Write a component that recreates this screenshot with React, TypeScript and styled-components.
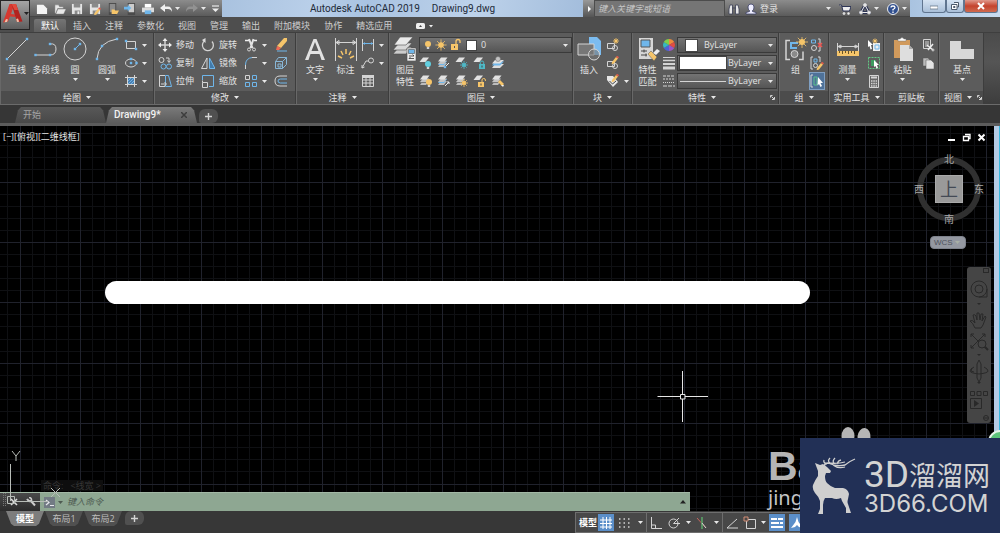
import React from "react";
import styled, { createGlobalStyle, css } from "styled-components";

const GlobalStyle = createGlobalStyle`
  * { box-sizing: border-box; }
  body {
    margin: 0;
    background: #000;
    color: #e2e2e2;
    font: 9px/12px "Open Sans", "Noto Sans CJK SC", sans-serif;
    overflow: hidden;
  }
  button, select, input { font: inherit; color: inherit; margin: 0; padding: 0; border: 0; background: none; }
  svg { display: block; flex: none; }
`;

const L = "#d4d4d4";
const B = "#6fb6ea";
const Y = "#f6c56a";

/* ---------- drawing helpers ---------- */

type IconProps = { size?: number; w?: number; box?: number; children: React.ReactNode };
const Icon = ({ size = 14, w, box, children }: IconProps) => (
  <svg
    width={w ?? size}
    height={size}
    viewBox={`0 0 ${w ?? box ?? size} ${box ?? size}`}
    fill="none"
    stroke={L}
    strokeWidth="1"
    aria-hidden="true"
  >
    {children}
  </svg>
);

const Arrow = () => (
  <svg width="5" height="3" viewBox="0 0 5 3" aria-hidden="true">
    <path d="M0 0h5L2.500 3z" fill="#e8e8e8" />
  </svg>
);

const Dot = ({ x, y }: { x: number; y: number }) => (
  <rect x={x - 1.2} y={y - 1.2} width="2.4" height="2.4" fill={B} stroke="none" />
);

const Bulb = ({ x, y, c = Y }: { x: number; y: number; c?: string }) => (
  <g stroke="none">
    <circle cx={x} cy={y} r="3" fill={c} />
    <path d={`M${x - 1.2} ${y + 3}h2.400v2h-2.400z`} fill={L} />
  </g>
);

const Sun = ({ x, y, r = 2.6, c = Y }: { x: number; y: number; r?: number; c?: string }) => (
  <g stroke={c}>
    <circle cx={x} cy={y} r={r} fill={c} stroke="none" />
    <path
      d={`M${x} ${y - r * 2}V${y + r * 2}M${x - r * 2} ${y}H${x + r * 2}M${x - r * 1.4} ${y - r * 1.4}L${x + r * 1.4} ${y + r * 1.4}M${x + r * 1.4} ${y - r * 1.4}L${x - r * 1.4} ${y + r * 1.4}`}
      strokeWidth=".8"
    />
  </g>
);

const Lock = ({ x, y, c = Y, open = false }: { x: number; y: number; c?: string; open?: boolean }) => (
  <g>
    <rect x={x} y={y} width="6" height="5" fill={c} stroke="none" />
    <path d={open ? `M${x + 4} ${y}v-2q0-1.500 1.700-1.500t1.700 1.500v1` : `M${x + 1.3} ${y}v-1.500q0-1.500 1.700-1.500t1.700 1.500v1.500`} stroke={c} />
    <rect x={x + 2.5} y={y + 1.5} width="1" height="2" fill="#444" stroke="none" />
  </g>
);

const Pencil = ({ x, y }: { x: number; y: number }) => (
  <g stroke="none">
    <path d={`M${x} ${y}l4-5 2 1.500-4 5-2.400 .8z`} fill={Y} />
    <path d={`M${x + 4} ${y - 5}l1-1.300 2 1.500-1 1.300z`} fill="#e25a4a" />
  </g>
);

const Sheets = ({ blue = false }: { blue?: boolean }) => (
  <g stroke="none">
    <path d="M4 7l-3 4h6l3-4z" fill="#bcbcbc" />
    <path d="M4 5l-3 4h6l3-4z" fill={blue ? B : "#777"} />
    <path d="M4 4.500l-3 3.500h6l3-3.500z" fill="#c4c4c4" />
    <path d="M4 1.500l-3 4h6.500l3-4z" fill="#e2e2e2" />
  </g>
);

const OneSheet = () => <path d="M4 1.500l-3.500 4.500h6l3.500-4.500z" fill="#e2e2e2" stroke="none" />;

/* ---------- page frame ---------- */

const Page = styled.div`
  position: relative;
  display: flex;
  flex-direction: column;
  min-height: 100vh;
`;

const Header = styled.header`
  display: grid;
  grid-template: 17px 15px / 30px 1fr;
  background: #4e4e4e;
`;

const AppButton = styled.button`
  grid-row: 1 / 3;
  display: flex;
  align-items: center;
  gap: 1px;
  padding: 0 1px 4px 2px;
  height: 30px;
  border: 1px solid #262626;
  background: linear-gradient(#a4a4a4, #5e5e5e);
  overflow: hidden;
`;

const TitleBar = styled.div`
  display: grid;
  grid-template-columns: 192px 1fr 11px 131px 185px 90px;
  background: linear-gradient(#8c8c8c, #5b5b5b);
  border-bottom: 1px solid #444;
`;

const QuickBar = styled.div`
  display: flex;
  align-items: center;
  gap: 6px;
  padding-left: 6px;
`;

const QuickGroup = styled.div`
  display: flex;
  justify-content: space-between;
  width: 118px;
`;

const PlainButton = styled.button`
  display: flex;
  align-items: center;
  gap: 3px;
`;

const WindowTitle = styled.h1`
  display: flex;
  justify-content: center;
  gap: 12px;
  margin: 0;
  color: #1e2a38;
  font: 400 10px/17px Roboto, sans-serif;
  background: linear-gradient(100deg, #a9c2df, #b9cfe9 25%, #a9c3e2 40%, #bdd2ea 70%, #a3bddc);
`;

const SearchToggle = styled.button`
  display: grid;
  place-items: center;
  background: linear-gradient(#999, #555);
`;

const Search = styled.input`
  min-width: 0;
  padding: 0 3px;
  border: 1px solid #4c4c4c;
  background: #757575;
  font-style: italic;
  &::placeholder { color: #c6c6c6; opacity: 1; }
`;

const Account = styled.div`
  display: grid;
  grid-template-columns: 17px 1fr auto;
  align-items: center;
  padding: 0 3px;
`;

const AccountTools = styled.div`
  display: flex;
  align-items: center;
  gap: 8px;
`;

const WindowButtons = styled.div`
  display: flex;
  align-items: flex-start;
  justify-content: flex-end;
  padding-right: 2px;
  background: linear-gradient(90deg, #a9c3e0, #c9dcf1);
`;

const WindowButton = styled.button<{ $w: number; $close?: boolean }>`
  display: grid;
  place-items: center;
  width: ${(p) => p.$w}px;
  height: 13px;
  border: 1px solid #60758f;
  border-top: 0;
  border-radius: 0 0 3px 3px;
  background: ${(p) => (p.$close ? "linear-gradient(#e0998c, #c4432e 50%, #cf6a50)" : "linear-gradient(#d5e3f2, #a9bfd8)")};
`;

const RibbonTabs = styled.nav`
  display: flex;
  align-items: flex-end;
  padding-left: 4px;
`;

const RibbonTab = styled.button<{ $active?: boolean }>`
  height: 13px;
  padding: 0 7px;
  line-height: 12px;
  white-space: nowrap;
  border-radius: 2px 2px 0 0;
  color: ${(p) => (p.$active ? "#fff" : "#cfcfcf")};
  background: ${(p) => (p.$active ? "linear-gradient(#747474, #5e5e5e)" : "none")};
`;

/* ---------- ribbon ---------- */

const panelShares = [154, 142, 93, 184, 59, 147, 50, 55, 55, 45, 16];

const Ribbon = styled.div`
  display: grid;
  grid-template-columns: ${panelShares.map((s) => `minmax(0, ${s}fr)`).join(" ")};
  height: 73px;
  border-top: 1px solid #3f3f3f;
  border-bottom: 1px solid #6b6b6b;
  background: #4a4a4a;
`;

const PanelBox = styled.section`
  display: flex;
  flex-direction: column;
  border-right: 1px solid #3d3d3d;
  border-left: 1px solid #686868;
  background: #5c5c5c;
`;

const RibbonTail = styled.div`
  background: linear-gradient(#4b4b4b, #555 40%, #3d3d3d);
`;

const PanelBody = styled.div<{ $pad?: number; $gap?: number }>`
  display: flex;
  flex: 1;
  gap: ${(p) => p.$gap ?? 0}px;
  padding: 4px 0 0 ${(p) => p.$pad ?? 0}px;
`;

const PanelFooter = styled.button`
  display: flex;
  align-items: center;
  justify-content: center;
  gap: 5px;
  height: 13px;
  background: #4c4c4c;
  white-space: nowrap;
`;

const FooterEnd = styled.span<{ $far?: boolean }>`
  margin-left: ${(p) => (p.$far ? "auto" : "0")};
  margin-right: ${(p) => (p.$far ? 3 : 0)}px;
`;

const FooterStart = styled.span<{ $far?: boolean }>`
  margin-left: ${(p) => (p.$far ? "auto" : "0")};
  padding-left: ${(p) => (p.$far ? 6 : 0)}px;
`;

const Big = styled.button<{ $w: number }>`
  display: flex;
  flex-direction: column;
  align-items: center;
  flex: none;
  width: ${(p) => p.$w}px;
  height: 52px;
  white-space: nowrap;
  & > span { margin-top: 3px; }
  & > span + svg { margin-top: 2px; }
`;

const Column = styled.div`
  display: flex;
  flex-direction: column;
  flex: none;
  gap: 2px;
`;

const Small = styled.button<{ $active?: boolean }>`
  display: flex;
  align-items: center;
  gap: 4px;
  height: 16px;
  white-space: nowrap;
  ${(p) =>
    p.$active &&
    css`
      background: #4f7299;
      outline: 1px solid #7f9fc2;
    `}
`;

const Row = styled.div<{ $gap: number }>`
  display: flex;
  align-items: center;
  gap: ${(p) => p.$gap}px;
`;

const Combo = styled.label<{ $gap?: number; $pad?: number }>`
  display: flex;
  align-items: center;
  gap: ${(p) => p.$gap ?? 2}px;
  height: 16px;
  padding: 0 3px 0 ${(p) => p.$pad ?? 2}px;
  border: 1px solid #3a3a3a;
  background: linear-gradient(#737373, #555);
`;

const ComboSelect = styled.select`
  appearance: none;
  flex: 1;
  min-width: 0;
  outline: 0;
`;

const Swatch = styled.span<{ $w: number; $h: number }>`
  flex: none;
  width: ${(p) => p.$w}px;
  height: ${(p) => p.$h}px;
  background: #fff;
  outline: 1px solid #444;
`;

const LayerArea = styled.div`
  display: flex;
  flex-direction: column;
  flex: 1;
  min-width: 0;
  gap: 2px;
`;

const PropertyArea = styled(LayerArea)`
  margin: 0 1px;
`;

/* ---------- document tabs ---------- */

const DocTabs = styled.nav`
  display: flex;
  align-items: flex-end;
  height: 21px;
  padding-left: 15px;
  border-bottom: 3px solid #5c5c5c;
  background: #363636;
`;

const DocTab = styled.button<{ $active?: boolean }>`
  display: flex;
  align-items: center;
  justify-content: space-between;
  width: 91px;
  height: 16px;
  padding: 0 10px 0 8px;
  color: ${(p) => (p.$active ? "#f2f2f2" : "#a5a5a5")};
  font: ${(p) => (p.$active ? "500 10px/12px Roboto, sans-serif" : "inherit")};
  background: ${(p) => (p.$active ? "linear-gradient(#7a7a7a, #5c5c5c)" : "linear-gradient(#585858, #484848)")};
  clip-path: polygon(0 100%, 3px 20%, 6px 0, calc(100% - 6px) 0, calc(100% - 3px) 20%, 100% 100%);
`;

const AddTab = styled.button`
  display: grid;
  place-items: center;
  width: 19px;
  height: 14px;
  margin-left: 2px;
  border-radius: 6px 6px 6px 2px;
  background: #505050;
`;

/* ---------- drawing area ---------- */

const Canvas = styled.main`
  position: relative;
  flex: 1;
  min-height: 384px;
  border-right: 6px solid transparent;
  background:
    linear-gradient(#000, #000) padding-box,
    linear-gradient(270deg, #35b6dd 1px, #b4cbe5 1px) border-box;
`;

const Drawing = styled.svg`
  position: absolute;
  inset: 0;
`;

const ViewLabel = styled.div`
  position: absolute;
  top: 5px;
  left: 3px;
  color: #e4e4e4;
`;

const ViewWindow = styled.div`
  position: absolute;
  top: 7px;
  right: 8px;
  display: flex;
  gap: 6px;
`;

const ViewCube = styled.div`
  position: absolute;
  top: 27px;
  right: 9px;
  display: grid;
  grid-template: 12px 48px 12px / 12px 48px 12px;
  place-items: center;
  color: #a8a8a8;
  font-size: 10px;
  & > svg { position: absolute; top: 3px; left: 3px; }
  & > span { position: relative; }
`;

const CubeFace = styled.button`
  position: relative;
  grid-area: 2 / 2;
  width: 28px;
  height: 28px;
  border: 1px solid #aaa;
  background: #999;
  color: #444a55;
  font-size: 18px;
  line-height: 24px;
`;

const Place = styled.span<{ $area: string }>`
  grid-area: ${(p) => p.$area};
`;

const Wcs = styled.button`
  position: absolute;
  top: 110px;
  right: 28px;
  display: flex;
  align-items: center;
  justify-content: space-between;
  width: 36px;
  height: 13px;
  padding: 0 5px 0 3px;
  border: 1px solid #7e828c;
  border-radius: 4px;
  background: #9498a1;
  color: #4e525c;
  font: 8px/10px "Liberation Sans", sans-serif;
`;

const NavBar = styled.div`
  position: absolute;
  top: 141px;
  right: 3px;
  width: 24px;
  height: 156px;
  border-radius: 3px;
  background: #454545;
`;

const History = styled.div`
  position: absolute;
  left: 41px;
  bottom: 20px;
  padding: 0 2px;
  background: #0e0e0e;
  color: #363636;
  white-space: pre;
  line-height: 11px;
`;

const CommandBar = styled.div`
  position: absolute;
  left: 0;
  bottom: 0;
  display: grid;
  grid-template-columns: 40px 24px 1fr 10px;
  align-items: center;
  width: calc(69% + 4px);
  height: 19px;
  background: #8ea792;
  border-top: 1px solid #a2b8a5;
`;

const CommandTools = styled.div`
  display: flex;
  align-items: center;
  align-self: stretch;
  gap: 8px;
  padding-left: 10px;
  background: linear-gradient(#4a4a4a, #2b2b2b);
`;

const CommandInput = styled.input`
  padding-left: 3px;
  outline: 0;
  font-style: italic;
  &::placeholder { color: #4d5a51; opacity: 1; }
`;

const UcsIcon = styled.svg`
  position: absolute;
  left: 0;
  bottom: 0;
`;

/* ---------- status bar ---------- */

const StatusBar = styled.footer`
  display: grid;
  grid-template-columns: 23fr 17fr;
  height: 22px;
  background: #373737;
`;

const LayoutTabs = styled.nav`
  display: flex;
  align-items: flex-start;
  gap: 1px;
  padding-left: 6px;
`;

const LayoutTab = styled.button<{ $active?: boolean }>`
  width: 38px;
  height: 15px;
  color: ${(p) => (p.$active ? "#fff" : "#bdbdbd")};
  font-weight: ${(p) => (p.$active ? 700 : 400)};
  background: ${(p) => (p.$active ? "#7d7d7d" : "#505050")};
  clip-path: polygon(0 0, 100% 0, calc(100% - 5px) 85%, calc(100% - 8px) 100%, 8px 100%, 5px 85%);
`;

const StatusTools = styled.div`
  display: flex;
  align-items: center;
  height: 21px;
  margin-top: 1px;
  padding-left: 2px;
  border: 1px solid #6e6e6e;
  background: #484848;
`;

const StatusButton = styled.button<{ $w: number; $active?: boolean; $split?: boolean }>`
  display: grid;
  place-items: center;
  flex: none;
  width: ${(p) => p.$w}px;
  height: ${(p) => (p.$split ? 19 : 17)}px;
  border-right: ${(p) => (p.$split ? "1px solid #6e6e6e" : "0")};
  background: ${(p) => (p.$active ? "#5b8fc9" : "none")};
  color: #fff;
  font-weight: 700;
`;

/* ---------- marks that lie over the window ---------- */

const PawMark = styled.div`
  position: absolute;
  right: 132px;
  bottom: 20px;
  width: 100px;
  height: 87px;
  color: #b5b5b5;
  font-family: "Liberation Sans", sans-serif;
  & > svg { position: absolute; top: 0; left: 68px; }
`;

const PawName = styled.div`
  margin-top: 20px;
  font-size: 41px;
  font-weight: 700;
  line-height: 41px;
`;

const PawHost = styled.div`
  font: 20px/22px "Noto Sans", sans-serif;
  color: #c6c6c6;
`;

const Orb = styled.svg`
  position: absolute;
  right: 0;
  bottom: 95px;
`;

const Brand = styled.a`
  position: absolute;
  right: 0;
  bottom: 0;
  display: grid;
  grid-template-columns: 64px 1fr;
  width: 200px;
  height: 95px;
  background: #223056;
  color: #d3d3d3;
  text-decoration: none;
`;

const BrandText = styled.div`
  display: flex;
  flex-direction: column;
  padding-top: 19px;
`;

const BrandName = styled.div`
  display: flex;
  align-items: center;
  height: 36px;
  font: 27px/36px "Noto Sans CJK SC", sans-serif;
  white-space: nowrap;
`;

const BrandLatin = styled.span`
  font: 37px/36px Roboto, sans-serif;
`;

const BrandHost = styled.div`
  font: 24px/22px Inter, sans-serif;
`;

/* ---------- ribbon panel wrapper ---------- */

type PanelProps = {
  name: string;
  pad?: number;
  gap?: number;
  menu?: boolean;
  launcher?: boolean;
  children: React.ReactNode;
};
const Panel = ({ name, pad, gap, menu = true, launcher, children }: PanelProps) => (
  <PanelBox>
    <PanelBody $pad={pad} $gap={gap}>{children}</PanelBody>
    <PanelFooter>
      <FooterStart $far={launcher}>{name}</FooterStart>
      {menu && <Arrow />}
      {launcher && (
        <FooterEnd $far>
          <Icon size={5}><path d="M.5 2.500v-2h2M1.500 1.500l2.500 2.500M4.500 2V4.500H2" /></Icon>
        </FooterEnd>
      )}
    </PanelFooter>
  </PanelBox>
);

const File = () => <path d="M1 2h7l4 4v6H1z" fill="#f4f4f4" stroke="none" />;
const Disk = () => (
  <g stroke="none">
    <path d="M1 1h11v11H1z" fill="#e4e4e4" />
    <path d="M3 1h7v4H3zM4 8h6v4H4z" fill="#8a8a8a" />
    <path d="M7 9h2v3H7z" fill="#eee" />
  </g>
);

const quick: [string, React.ReactNode][] = [
  ["新建", <File />],
  ["打开", <path d="M1 11V2h4l1 2h4v2H4l-2 5M4 6.500h9L10.500 12H2z" fill="#e8e8e8" stroke="#777" strokeWidth=".5" />],
  ["保存", <Disk />],
  ["另存为", <g><Disk /><Pencil x={6} y={11} /></g>],
  ["从移动端打开", <g stroke="none"><path d="M2 0h8v13H2z" fill="#4b4b4b" /><path d="M3 1h6v9H3z" fill="#8c8c8c" /><path d="M5 7h3l1 1h4l-2 4H5z" fill={Y} /></g>],
  ["保存到移动端", <g stroke="none"><path d="M4 0h8v13H4z" fill="#4b4b4b" /><path d="M5 1h6v9H5z" fill="#ccc" /><path d="M0 4h4V2l4 3.500L4 9V7H0z" fill={B} /></g>],
  ["打印", <g stroke="none"><path d="M3 1h7v4H3z" fill="#fff" /><path d="M0 5h13v5H0z" fill="#dcdcdc" /><path d="M3 8h7v4H3z" fill={B} /></g>],
];

const undo = "M0 5l5-4v2.500h3q4 0 4 5.500-1-3-4-3H5v3z";

const ribbonTabs = ["默认", "插入", "注释", "参数化", "视图", "管理", "输出", "附加模块", "协作", "精选应用"];

const layerTools: [string, React.ReactNode][] = [
  ["关闭图层", <g><OneSheet /><Bulb x={9} y={8} c="#62cfe0" /></g>],
  ["图层状态", <g><Sheets blue /><path d="M8 11l4-4" stroke="#eee" /><Dot x={8} y={11} /></g>],
  ["冻结图层", <g><OneSheet /><Sun x={9} y={9} r={2} c="#4fb9c7" /></g>],
  ["锁定图层", <g><OneSheet /><Lock x={6} y={8} c="#4fb9c7" /></g>],
  ["置为当前", <g stroke="none"><path d="M4 8l-3 4h8l4-4z" fill="#ddd" /><path d="M4 5.500L1 9.500h8l4-4z" fill={B} /><path d="M4 4L1 7.500h8L13 4z" fill="#e2e2e2" /><circle cx="7" cy="3" r="2.500" fill="#c4c4c4" stroke="#666" strokeWidth=".5" /></g>],
  ["打开图层", <g><Sheets /><Bulb x={10} y={8} /></g>],
  ["匹配图层", <g><Sheets blue /><path d="M8 12l4-4M12 10V8h-2" stroke="#eee" /></g>],
  ["解冻图层", <g><Sheets /><Sun x={9} y={9} r={2} /></g>],
  ["解锁图层", <g><OneSheet /><Lock x={5} y={8} open /></g>],
  ["复制图层", <g><Sheets /><path d="M7 8l4 4 2-2-4-4z" fill={Y} stroke="none" /><path d="M10 11l2 2 1-2z" fill="#eee" stroke="none" /></g>],
];

const gridStep = 60.4;
const gridSpan = 302;
const gridLines = Array.from({ length: 25 }, (_, i) => ({
  at: Math.floor((i * gridStep) / 5) + 0.5,
  major: i % 5 === 0,
}));

export default function App() {
  return (
    <Page>
      <GlobalStyle />
      <Header>
        <AppButton aria-label="应用程序菜单">
          <Icon size={20}>
            <g stroke="none">
              <path d="M6.500 1h5L8 11l4 .5V14l-5-.5L5 18.500l-5 1z" fill="#d6382f" />
              <path d="M8.500 1h4.500l6.500 17.500-5.500 .5-2-6.500z" fill="#b3231f" />
              <path d="M8.500 1H13l2 6-3.500 0z" fill="#e04a3d" />
              <path d="M1.500 19.200L3 16l2 .5-1 2.500zM14 19l-.8-3 1.800-.5 1.200 3.200z" fill="#f3c0a8" />
            </g>
          </Icon>
          <svg width="5" height="3" viewBox="0 0 5 3"><path d="M0 0h5L2.500 3z" fill="#222" /></svg>
        </AppButton>
        <TitleBar>
          <QuickBar>
            <QuickGroup>
              {quick.map(([n, d]) => (
                <PlainButton key={n} aria-label={n}><Icon size={12} box={13}>{d}</Icon></PlainButton>
              ))}
            </QuickGroup>
            <PlainButton aria-label="放弃"><Icon size={12}><path d={undo} fill="#f0f0f0" stroke="none" /></Icon><Arrow /></PlainButton>
            <PlainButton aria-label="重做"><Icon size={12}><path d={undo} transform="matrix(-1 0 0 1 12 0)" fill="#929292" stroke="none" /></Icon><Arrow /></PlainButton>
            <PlainButton aria-label="自定义"><Icon size={7}><path d="M0 1h7" strokeWidth="1.500" /><path d="M0 3.500h7L3.500 7z" fill="#eee" stroke="none" /></Icon></PlainButton>
          </QuickBar>
          <WindowTitle><span>Autodesk AutoCAD 2019</span><span>Drawing9.dwg</span></WindowTitle>
          <SearchToggle aria-label="展开搜索"><Icon size={6}><path d="M2 0l3 3-3 3z" fill="#fff" stroke="none" /></Icon></SearchToggle>
          <Search aria-label="搜索" placeholder="键入关键字或短语" />
          <Account>
            <PlainButton aria-label="查找">
              <Icon size={12}><path d="M1 11V6l1-4h2.500v9zM11 11V6l-1-4H7.500v9zM4.500 5h3" fill="#e8e8e8" stroke="#3b3f55" strokeWidth=".8" /></Icon>
            </PlainButton>
            <PlainButton>
              <Icon size={12}><path d="M6 1q3 0 3 3T7.500 7.500v1L11 9.500V11H1V9.500l3.500-1v-1Q3 7 3 4t3-3z" fill="#eef" stroke="#3b3f66" strokeWidth=".8" /></Icon>
              登录
            </PlainButton>
            <AccountTools>
              <Arrow />
              <PlainButton aria-label="应用商店"><Icon size={12}><path d="M0 2h2.500L4 8h6.500L12 3.500H3" fill="#eee" stroke="#2e3555" /><circle cx="5" cy="10.500" r="1" fill="#eee" /><circle cx="9.500" cy="10.500" r="1" fill="#eee" /></Icon></PlainButton>
              <PlainButton aria-label="连接"><Icon size={12}><path d="M6 2L2 9.500h8z" stroke="#2e3555" strokeWidth="3" /><path d="M6 2L2 9.500h8z" stroke="#eee" /><circle cx="6" cy="2" r="1.500" fill="#eee" /><circle cx="2" cy="9.500" r="1.500" fill="#eee" /><circle cx="10" cy="9.500" r="1.500" fill="#eee" /></Icon><Arrow /></PlainButton>
              <PlainButton aria-label="帮助"><Icon size={12}><circle cx="6" cy="6" r="5.500" fill="#31508f" stroke="#eee" /><path d="M4 4.500Q4 3 6 3t2 1.500Q8 5.500 6 6.500V7.500M6 8.500V10" stroke="#fff" strokeWidth="1.300" /></Icon><Arrow /></PlainButton>
            </AccountTools>
          </Account>
          <WindowButtons>
            <WindowButton $w={24} aria-label="最小化"><Icon size={8}><path d="M0 4h8v3H0z" fill="#fff" stroke="#68788c" strokeWidth=".8" /></Icon></WindowButton>
            <WindowButton $w={18} aria-label="还原"><Icon size={8}><path d="M3 .5h4.500V5H6M.5 2.500H6v5H.5zM2.500 4.500h1.500v1H2.500z" fill="#fff" stroke="#4c5a6c" /></Icon></WindowButton>
            <WindowButton $w={34} $close aria-label="关闭"><Icon size={8}><path d="M1 1l6 6M7 1L1 7" stroke="#fff" strokeWidth="2" /></Icon></WindowButton>
          </WindowButtons>
        </TitleBar>
        <RibbonTabs>
          {ribbonTabs.map((t, i) => <RibbonTab key={t} $active={i === 0}>{t}</RibbonTab>)}
          <RibbonTab aria-label="最小化功能区">
            <Icon w={28} size={12}>
              <rect x="10" y="3" width="9" height="6" rx="1.500" fill="#eee" stroke="none" />
              <path d="M13 7h3l-1.500-2z" fill="#444" stroke="none" />
              <path d="M23 5h4l-2 2.500z" fill="#eee" stroke="none" />
            </Icon>
          </RibbonTab>
        </RibbonTabs>
      </Header>

      <Ribbon>
        <Panel name="绘图" pad={1}>
          <Big $w={30}><Icon size={24}><path d="M2 22L22 2" /><Dot x={2} y={22} /><Dot x={22} y={2} /></Icon><span>直线</span></Big>
          <Big $w={28}><Icon size={24}><path d="M1 18h15q6 0 6-6t-6-5" /><Dot x={1.5} y={18} /><Dot x={16} y={18} /><Dot x={16} y={7} /></Icon><span>多段线</span></Big>
          <Big $w={30}><Icon size={24}><circle cx="12" cy="12" r="11" /><path d="M12 12l5-5" stroke={B} /><Dot x={12} y={12} /><Dot x={17} y={7} /></Icon><span>圆</span><Arrow /></Big>
          <Big $w={34}><Icon size={24}><path d="M2 22Q3 5 22 2" /><Dot x={2} y={22} /><Dot x={7} y={9} /><Dot x={22} y={2} /></Icon><span>圆弧</span><Arrow /></Big>
          <Column>
            <Small aria-label="矩形"><Icon><path d="M2.500 3.500h9v7h-9z" /><Dot x={2} y={3} /><Dot x={12} y={11} /></Icon><Arrow /></Small>
            <Small aria-label="椭圆"><Icon><ellipse cx="7" cy="7" rx="5.500" ry="4" /><Dot x={7} y={7} /><Dot x={12.5} y={7} /><Dot x={7} y={3} /></Icon><Arrow /></Small>
            <Small aria-label="图案填充"><Icon><path d="M3.500 1v12M10.500 1v12M1 3.500h12M1 10.500h12" /><path d="M4 4h6v6H4z" fill="#4b7fb0" stroke="none" /><path d="M4 7l3-3M4 10l6-6M7 10l3-3" stroke={B} /></Icon><Arrow /></Small>
          </Column>
        </Panel>

        <Panel name="修改" pad={3} gap={7}>
          <Column>
            <Small><Icon><path d="M7 2v10M2 7h10" strokeWidth="1.500" /><path d="M7 0l2.500 3h-5zM7 14l2.500-3h-5zM0 7l3-2.500v5zM14 7l-3-2.500v5z" fill="#eee" stroke="none" /></Icon>移动</Small>
            <Small><Icon><circle cx="3.500" cy="4" r="2.500" /><path d="M8 2h3v4M9.500 4.500L11 6.500 12.500 4.500" /><circle cx="5.500" cy="10.500" r="2.500" stroke={B} /><circle cx="11" cy="10.500" r="2.500" stroke={B} /></Icon>复制</Small>
            <Small><Icon><path d="M7 1.500H1.500v11H7" /><path d="M7.500 1.500h3l3 11h-6z" stroke={B} /><path d="M3 10h5M6.500 8L8.500 10 6.500 12" /></Icon>拉伸</Small>
          </Column>
          <Column>
            <Small><Icon><path d="M4 2.500a5.500 5.500 0 1 0 7 1" strokeWidth="1.300" /><path d="M4.500 0v5L1 2z" fill="#ddd" stroke="none" /></Icon>旋转</Small>
            <Small><Icon><path d="M6 2v10.500H.5z" /><path d="M8.500 2v10.500H14z" fill="#427aa9" stroke={B} /></Icon>镜像</Small>
            <Small><Icon><path d="M1.500 6V1.500h11v11H8" stroke={B} /><path d="M1.500 8.500h5v5h-5zM1.500 6.500v2" /></Icon>缩放</Small>
          </Column>
          <Column>
            <Small aria-label="修剪"><Icon><path d="M1 2.500h4M10 2.500h3" stroke="#eee" strokeWidth="1.500" /><path d="M5 1l3.500 9M9.500 1L6.500 10" stroke="#e4e4e4" strokeWidth="2" /><circle cx="5" cy="11.500" r="1.500" /><circle cx="10" cy="11.500" r="1.500" /></Icon><Arrow /></Small>
            <Small aria-label="圆角"><Icon><path d="M1.500 13V9q0-7 7-7.500" stroke={B} /><path d="M1.500 13V9M8 1.500h5" /></Icon><Arrow /></Small>
            <Small aria-label="阵列"><Icon><path d="M8.500 1.500h4v4h-4zM1.500 8.500h4v4h-4zM8.500 8.500h4v4h-4z" stroke={B} /><path d="M1.500 1.500h4v4h-4z" /></Icon><Arrow /></Small>
          </Column>
          <Column>
            <Small aria-label="删除"><Icon><path d="M3 8l7-8h3v3L7 10z" fill={Y} stroke="none" /><path d="M3 8l4 2-2 2H2z" fill="#ef6a55" stroke="none" /><path d="M3 13h10" stroke={B} /></Icon></Small>
            <Small aria-label="分解"><Icon><path d="M1.500 5.500h7v7h-7zM1.500 5.500l3-4h8v7l-4 4M8.500 5.500l4-4M4 8h3v3H4z" stroke="#88b7d7" /></Icon></Small>
            <Small aria-label="偏移"><Icon><path d="M13 2H6Q1 2 1 7t5 5h7" /><path d="M13 5H6.500Q4 5 4 7t2.500 2H13" stroke={B} /></Icon></Small>
          </Column>
        </Panel>

        <Panel name="注释" pad={3}>
          <Big $w={30}><Icon size={24}><path d="M2 23L10.500 2h3L22 23h-3.500l-2-6h-9l-2 6zM8.500 14h7L12 5z" fill="#e2e2e2" stroke="none" fillRule="evenodd" /></Icon><span>文字</span><Arrow /></Big>
          <Big $w={31}><Icon size={24}><path d="M1.500 1v23M22.500 1v23M2 5.500h20M2 5.500l3-2v4zM22 5.500l-3-2v4z" /><path d="M12 12v5M7 14l2 4M17 14l-2 4M4 19l4 2M20 19l-4 2" stroke={Y} strokeWidth="1.500" /></Icon><span>标注</span></Big>
          <Column>
            <Small aria-label="线性"><Icon><path d="M1.500 1v12M12.500 1v12" /><path d="M2 5.500h10" stroke={B} /><path d="M2 5.500l2-1.500v3zM12 5.500L10 4v3z" fill={B} stroke="none" /></Icon><Arrow /></Small>
            <Small aria-label="引线"><Icon><path d="M1 12l4-7h3M1 12v-3M1 12l2.500-1" /><circle cx="10" cy="4.500" r="2.500" /></Icon><Arrow /></Small>
            <Small aria-label="表格"><Icon><path d="M1.500 1.500h11v11h-11zM1.500 6h11M1.500 9h11M5 4v9M9 4v9" /><path d="M1 1h12v3H1z" fill={L} stroke="none" /></Icon></Small>
          </Column>
        </Panel>

        <Panel name="图层" pad={1}>
          <Big $w={28}>
            <Icon size={24}>
              <g stroke="#4d4d4d" strokeWidth=".6">
                <path d="M6 10l-6 7h13l6-7z" fill="#ccc" /><path d="M6 6l-6 7h13l6-7z" fill="#d8d8d8" /><path d="M7 0L1 8h12l7-8z" fill="#eaeaea" />
                <path d="M14 11h9v13h-9z" fill="#eee" /><path d="M15.500 12.500h6v4h-6z" fill={B} />
              </g>
              <path d="M16 19h5M19.500 17.500L21 19M21 21.500h-5M17.500 20l-1.500 1.500" stroke="#333" strokeWidth=".8" />
            </Icon>
            <span>图层<br />特性</span>
          </Big>
          <LayerArea>
            <Combo $gap={5} $pad={4}>
              <Icon w={38} size={14}>
                <Bulb x={4} y={6} /><Sun x={17} y={7} r={2.8} />
                <path d="M32 6V3.500q0-2 2-2t2 2V5" stroke={Y} strokeWidth="1.300" /><path d="M27 6h7v6h-7z" fill={Y} stroke="none" /><path d="M30 8h1v2h-1z" fill="#555" stroke="none" />
              </Icon>
              <Swatch $w={9} $h={9} />
              <ComboSelect aria-label="图层"><option>0</option></ComboSelect>
              <Arrow />
            </Combo>
            {[0, 5].map((start) => (
              <Row $gap={4} key={start}>
                {layerTools.slice(start, start + 5).map(([n, d]) => <Small key={n} aria-label={n}><Icon>{d}</Icon></Small>)}
              </Row>
            ))}
          </LayerArea>
        </Panel>

        <Panel name="块" pad={0} gap={2}>
          <Big $w={30}><Icon size={24}><path d="M12 0h8l4 4v14H12z" fill="#7cbcf0" stroke="none" /><path d="M1 7h16v11H1z" fill="#777" /><circle cx="17" cy="17.500" r="5.500" fill="#77777799" /></Icon><span>插入</span></Big>
          <Column>
            <Small aria-label="创建"><Icon><path d="M1.500 5.500h7v5h-7z" /><circle cx="9" cy="10" r="2.500" /><Sun x={10} y={3} r={1.5} /></Icon></Small>
            <Small aria-label="编辑"><Icon><path d="M1.500 5.500h7v5h-7z" /><circle cx="9" cy="10" r="2.500" /><Pencil x={6} y={6} /></Icon></Small>
            <Small aria-label="编辑属性"><Icon><path d="M1 2h6l5 6-5 5-6-7z" fill="#e6e6e6" stroke="none" /><path d="M3.500 7l3 3L10 7" stroke="#444" /><Pencil x={6} y={6} /></Icon><Arrow /></Small>
          </Column>
        </Panel>

        <Panel name="特性" launcher>
          <Big $w={29}>
            <Icon size={24}>
              <path d="M3 1h14v21H3z" fill="#d6d6d6" stroke="none" /><path d="M5 3h9v7H5z" fill={B} stroke="#555" />
              <path d="M5 14h6M5 18h6M8 12.500v3M10 16.500v3" stroke="#444" />
              <path d="M12 17l3-3 6 6-3 4z" fill={Y} stroke="#555" strokeWidth=".5" /><path d="M17 16l4-4 3 2-4 4z" fill="#eee" stroke="none" />
            </Icon>
            <span>特性<br />匹配</span>
          </Big>
          <Column>
            <Small aria-label="对象颜色"><Icon><g stroke="none"><path d="M7 7V1a6 6 0 0 1 5.200 3z" fill="#f08a3c" /><path d="M7 7l5.200-3a6 6 0 0 1 0 6z" fill="#e24c42" /><path d="M7 7l5.200 3A6 6 0 0 1 7 13z" fill="#9b56c8" /><path d="M7 7v6a6 6 0 0 1-5.200-3z" fill="#4d63d8" /><path d="M7 7l-5.200 3a6 6 0 0 1 0-6z" fill="#36b8c0" /><path d="M7 7L1.800 4A6 6 0 0 1 7 1z" fill="#7fce4c" /></g></Icon></Small>
            <Small aria-label="线宽"><Icon><path d="M1 1.500h12" /><path d="M1 4.500h12" strokeWidth="1.500" /><path d="M1 8h12" strokeWidth="2" /><path d="M1 12h12" strokeWidth="3" /></Icon></Small>
            <Small aria-label="线型"><Icon><path d="M1 2h12" strokeDasharray="3 1" /><path d="M1 5h12" strokeDasharray="2 1" /><path d="M1 8.500h12" strokeDasharray="1 1" /><path d="M1 12h12" strokeDasharray="4 1" /></Icon></Small>
          </Column>
          <PropertyArea>
            <Combo $gap={7} $pad={8}><Swatch $w={11} $h={11} /><ComboSelect aria-label="颜色"><option>ByLayer</option></ComboSelect><Arrow /></Combo>
            <Combo><Swatch $w={46} $h={12} /><ComboSelect aria-label="线宽"><option>ByLayer</option></ComboSelect><Arrow /></Combo>
            <Combo><Icon w={46} size={3}><path d="M0 1.500h46" /></Icon><ComboSelect aria-label="线型"><option>ByLayer</option></ComboSelect><Arrow /></Combo>
          </PropertyArea>
        </Panel>

        <Panel name="组" pad={1}>
          <Big $w={29}><Icon size={24}><path d="M6 3.500H2v19h4M15 22.500h4v-8" strokeWidth="1.500" /><path d="M14 6H7v5h6" stroke={B} strokeWidth="2" /><circle cx="10.500" cy="17" r="3.500" fill="#8a8a8a" /><Sun x={18} y={5} r={3} /></Icon><span>组</span></Big>
          <Column>
            <Small aria-label="解除编组"><Icon><path d="M1.500 2h4v3h-4z" stroke={B} /><circle cx="4" cy="10" r="2.500" /><path d="M8 1h2v12H8" /><path d="M8 5l4 4M12 5L8 9" stroke="#ef5350" strokeWidth="1.500" /></Icon></Small>
            <Small aria-label="组编辑"><Icon><path d="M3 1H1v12h2M8 1h2v5" /><path d="M4 3h3v3H4z" stroke={B} /><circle cx="5.500" cy="9.500" r="2" /><Pencil x={7} y={12} /></Icon></Small>
            <Small $active aria-label="启用组选择"><Icon><path d="M3 1H1v12h2" /><path d="M4 3h3v8H4z" stroke="#59c08c" /><path d="M8 3l5 6H10.500l1.500 3-1.500 1-1.500-3-1.500 1.500z" fill="#fff" stroke="none" /></Icon></Small>
          </Column>
        </Panel>

        <Panel name="实用工具" pad={2} gap={4}>
          <Big $w={31}><Icon size={24}><path d="M1.500 6v9M22.500 6v9M2 9.500h20M2 9.500L5 8v3zM22 9.500L19 8v3z" /><path d="M1 14h22v5H1z" fill={Y} stroke="none" /><path d="M3.500 14v2M6.500 14v3M9.500 14v2M12.500 14v3M15.500 14v2M18.500 14v3" stroke="#6b5426" /></Icon><span>测量</span><Arrow /></Big>
          <Column>
            <Small aria-label="快速选择"><Icon><path d="M6 5h7v8H6z" fill="#eee" stroke="none" /><path d="M8 7h4v4H8z" stroke={B} /><path d="M1 2l5 5H4l1 4-1.500 .5L2.500 8 1 9z" fill="#fff" stroke="none" /><Sun x={8} y={3} r={1.3} /></Icon></Small>
            <Small aria-label="全部选择"><Icon><path d="M1.500 1.500h11v11h-11z" stroke="#62c984" strokeDasharray="2 1" /><path d="M4 4h5v6H4z" fill="#3d9c60" stroke="none" /><path d="M7 4l5 5h-2l1 3-1.500 .5L8.500 10 7 11z" fill="#fff" stroke="none" /></Icon></Small>
            <Small aria-label="快速计算器"><Icon><path d="M2.500 1.500h9v12h-9z" fill="#666" /><path d="M4 3.500h6" strokeWidth="2" /><path d="M4 7h6M4 9.500h6M4 12h6" strokeDasharray="1.500 .8" strokeWidth="1.500" /></Icon></Small>
          </Column>
        </Panel>

        <Panel name="剪贴板" pad={2} gap={3} menu={false}>
          <Big $w={31}><Icon size={24}><path d="M3 3h16v18H3z" fill="#d19a5c" stroke="none" /><path d="M7 4V2h2q2-3 4 0h2v2z" fill="#fff" stroke="#777" strokeWidth=".5" /><path d="M9 8h9l4 4v12H9z" fill="#dedede" stroke="none" /><path d="M18 8v4h4z" fill="#aaa" stroke="none" /></Icon><span>粘贴</span><Arrow /></Big>
          <Column>
            <Small aria-label="剪切"><Icon><path d="M2.500 1.500h7v9h-7zM4 4h4M4 6h4M4 8h3" /><path d="M6 7l6 5M12 6L7 12" stroke="#eee" strokeWidth="1.500" /><circle cx="12" cy="12" r="1" /></Icon></Small>
            <Small aria-label="复制"><Icon><path d="M2 2h5l2 2v6H2z" fill="#bbb" stroke="#555" strokeWidth=".5" /><path d="M5 4h5l3 3v6H5z" fill="#e4e4e4" stroke="#555" strokeWidth=".5" /></Icon></Small>
          </Column>
        </Panel>

        <Panel name="视图" pad={7} launcher>
          <Big $w={30}><Icon size={24}><path d="M0 4h11v8h13v10H0z" fill="#d8d8d8" stroke="none" /></Icon><span>基点</span><Arrow /></Big>
        </Panel>
        <RibbonTail />
      </Ribbon>

      <DocTabs>
        <DocTab>开始</DocTab>
        <DocTab $active>Drawing9*<Icon size={6}><path d="M0 0l6 6M6 0L0 6" stroke="#3d3d3d" strokeWidth="1.500" /></Icon></DocTab>
        <AddTab aria-label="新图形"><Icon size={7}><path d="M3.500 0v7M0 3.500h7" strokeWidth="1.400" /></Icon></AddTab>
      </DocTabs>

      <Canvas>
        <Drawing width="100%" height="100%" aria-hidden="true">
          <defs>
            <pattern id="grid" x="20" y="56" width={gridSpan} height={gridSpan} patternUnits="userSpaceOnUse">
              {[false, true].map((major) =>
                gridLines.filter((l) => l.major === major).map((l) => (
                  <path key={l.at} d={`M${l.at} 0V${gridSpan}M0 ${l.at}H${gridSpan}`} stroke={major ? "#20222c" : "#0f1013"} />
                ))
              )}
            </pattern>
          </defs>
          <rect width="100%" height="100%" fill="url(#grid)" />
          <rect x="105" y="155" width="705" height="23" rx="11.500" fill="#fff" />
          <path d="M657.500 270.500h23M685 270.500h23M682.500 245v23M682.500 273v23M680.500 268.500h4.500v4.500h-4.500z" fill="none" stroke="#e6e6e6" />
        </Drawing>
        <ViewLabel>[−][俯视][二维线框]</ViewLabel>
        <ViewWindow>
          <PlainButton aria-label="最小化视口"><Icon size={9}><path d="M1 7h7" stroke="#fff" strokeWidth="2" /></Icon></PlainButton>
          <PlainButton aria-label="还原视口"><Icon size={9}><path d="M3 1.500h5v4H6.500M1.500 3.500h5v4h-5z" stroke="#fff" strokeWidth="1.300" /></Icon></PlainButton>
          <PlainButton aria-label="关闭视口"><Icon size={9}><path d="M1.500 1.500l6 6M7.500 1.500l-6 6" stroke="#fff" strokeWidth="2" /></Icon></PlainButton>
        </ViewWindow>
        <ViewCube>
          <Icon size={66}><circle cx="33" cy="33" r="29" stroke="#303030" strokeWidth="6" /></Icon>
          <Place $area="1 / 2">北</Place>
          <Place $area="2 / 1">西</Place>
          <CubeFace>上</CubeFace>
          <Place $area="2 / 3">东</Place>
          <Place $area="3 / 2">南</Place>
        </ViewCube>
        <Wcs>WCS<Icon size={5}><path d="M0 1h5L2.500 4z" fill="#a8b0a6" stroke="none" /></Icon></Wcs>
        <NavBar>
          <svg width="24" height="156" viewBox="0 0 24 156" fill="none" stroke="#292929" aria-label="导航栏">
            <rect x="16.500" y="1.500" width="5" height="4" />
            <circle cx="12" cy="22" r="8" /><circle cx="12" cy="22" r="4" /><path d="M12 30h8V22" />
            <path d="M10 36h4l-2 2zM10 87h4l-2 2zM10 115h4l-2 2z" fill="#292929" stroke="none" />
            <path d="M8 61q-2-5-5-7 2-2 5 2l-2-8q2-1 3 1l1 4V46h2l1 7 1-6h2l-1 7 3-5 1 1-3 8-2 3z" />
            <path d="M4 67l14 14M18 67L4 81M4 70v-3h3M15 67h3v3M4 78v3h3" /><circle cx="15" cy="77" r="4" fill="#454545" /><path d="M18 80l3 3" strokeWidth="2" />
            <path d="M10 97l2-4 2 4v14l-2 4-2-4zM7 100q-4 2-4 4t9 3q9-1 9-3t-4-4M7 105l-3-1 1-3" />
            <path d="M3.500 124.500h4v4h-4zM10 124.500h4v4h-4zM16.500 124.500h4v4h-4zM3.500 131.500h11v10h-11z" /><path d="M7 133l5 3.500-5 3.500z" fill="#292929" stroke="none" />
            <circle cx="19" cy="151" r="2.500" /><path d="M17 151h4" />
          </svg>
        </NavBar>
        <History>{"命令:   <线宽 >"}</History>
        <CommandBar>
          <CommandTools>
            <PlainButton aria-label="关闭命令行"><Icon size={8}><path d="M1 1l6 6M7 1L1 7" stroke="#ddd" strokeWidth="1.600" /></Icon></PlainButton>
            <PlainButton aria-label="自定义命令行"><Icon size={10}><path d="M1 2q2 3 4 2l4 4.500" stroke="#ccc" strokeWidth="2" /><path d="M3 .5q3 0 2.500 4" stroke="#ccc" strokeWidth="1.500" /></Icon></PlainButton>
          </CommandTools>
          <PlainButton aria-label="最近使用的命令">
            <Icon w={15} size={11}><path d="M4 0h11v11H4z" fill="#727b84" stroke="none" /><path d="M6 3l3 2.500L6 8M10 8.500h4" stroke="#e8e8ee" strokeWidth="1.200" /></Icon>
            <Icon size={5}><path d="M0 1h5L2.500 4z" fill="#4e5a51" stroke="none" /></Icon>
          </PlainButton>
          <CommandInput aria-label="命令行" placeholder="键入命令" />
          <PlainButton aria-label="历史记录"><Icon size={6}><path d="M0 4.500h6L3 1z" fill="#222" stroke="none" /></Icon></PlainButton>
        </CommandBar>
        <UcsIcon width="64" height="62" viewBox="0 0 64 62" fill="none" stroke="#b8bdb8" aria-hidden="true" pointerEvents="none">
          <path d="M12 2l4 5 4-5M16 7v5M10.500 15v37M7.500 47.500h7v7h-7zM14 52.500h34M51 39l9 9M60 39l-9 9" />
          <path d="M3.500 44v14M5.500 44v14" stroke="#777" strokeDasharray="1 1" />
        </UcsIcon>
      </Canvas>

      <StatusBar>
        <LayoutTabs>
          <LayoutTab $active>模型</LayoutTab>
          <LayoutTab>布局1</LayoutTab>
          <LayoutTab>布局2</LayoutTab>
          <AddTab aria-label="新建布局"><Icon size={7}><path d="M3.500 0v7M0 3.500h7" strokeWidth="1.400" /></Icon></AddTab>
        </LayoutTabs>
        <StatusTools>
          <StatusButton $w={20}>模型</StatusButton>
          <StatusButton $w={16} $active aria-label="栅格"><Icon><path d="M4 1v12M7.500 1v12M11 1v12M1 4h12M1 7.500h12M1 11h12" stroke="#fff" /></Icon></StatusButton>
          <StatusButton $w={20} aria-label="捕捉"><Icon><path d="M2 3h11M2 7h11M2 11h11" strokeWidth="1.500" strokeDasharray="1.500 3" /></Icon></StatusButton>
          <StatusButton $w={13} $split aria-label="捕捉设置"><Arrow /></StatusButton>
          <StatusButton $w={18} aria-label="正交"><Icon><path d="M2.500 1v11.500H13M2.500 9h4v3" /></Icon></StatusButton>
          <StatusButton $w={18} aria-label="极轴追踪"><Icon><circle cx="6.500" cy="7.500" r="4.500" /><path d="M6.500 7.500H13M6.500 7.500L12 2" /></Icon></StatusButton>
          <StatusButton $w={10} aria-label="极轴设置"><Arrow /></StatusButton>
          <StatusButton $w={18} aria-label="等轴测草图"><Icon><path d="M2 2l9 10" stroke="#c4645c" /><path d="M7 1v12" stroke="#5aa868" strokeWidth="1.500" /><path d="M7 7l4 5" /></Icon></StatusButton>
          <StatusButton $w={12} $split aria-label="等轴测设置"><Arrow /></StatusButton>
          <StatusButton $w={18} aria-label="对象捕捉追踪"><Icon><path d="M12 3L2 12h11" /></Icon></StatusButton>
          <StatusButton $w={17} aria-label="对象捕捉"><Icon><path d="M3.500 3.500h9v9h-9z" /><path d="M1 1h4v4H1z" fill="#484848" stroke="#d38d74" /></Icon></StatusButton>
          <StatusButton $w={11} aria-label="对象捕捉设置"><Arrow /></StatusButton>
          <StatusButton $w={16} $active aria-label="线宽"><Icon><path d="M1 3h6M8 3h5M1 7h8M10 7h3M1 11h12" stroke="#fff" strokeWidth="2" /></Icon></StatusButton>
          <StatusButton $w={4} aria-hidden="true" tabIndex={-1} />
          <StatusButton $w={16} $active aria-label="注释可见性"><Icon><path d="M7 1l1.500 5L13 12l-4-1-2-2-2 2-4 1 4.500-6z" fill="#fff" stroke="none" /></Icon></StatusButton>
        </StatusTools>
      </StatusBar>

      <PawMark>
        <svg width="40" height="34" viewBox="0 0 40 34" fill="#b5b5b5"><ellipse cx="12" cy="10" rx="6.500" ry="9" /><ellipse cx="28" cy="11" rx="6.500" ry="9" transform="rotate(6 28 11)" /></svg>
        <PawName>Ba</PawName>
        <PawHost>jing</PawHost>
      </PawMark>

      <Orb width="12" height="8" viewBox="0 0 12 8" aria-hidden="true">
        <circle cx="12" cy="12" r="11" fill="#5cc47a" stroke="#e6f5e8" strokeWidth="2" />
      </Orb>

      <Brand href="#" aria-label="3D66.COM">
        <svg width="64" height="95" viewBox="0 0 64 95" fill="#cfcfcf">
          <path d="M15 25l5 2 3-1 4 3 4 4-1 2-4 0-1 3q0 5 2 7 4 4 8 5l8 0q5 1 6 6l-1 5q-1 3 0 5l3 9h-5l0-5-4-7-1-3q-5 2-9 0l-7 0q-2 3-2 7l0 9h-5l2-5 0-8q-1-4-5-8-3-4-2-8 2-5 5-9l0-5z" />
          <path d="M24 28q1-3 4-3 9 4 17 2 5-4 10-6M28 25q10 1 17-1M27 26q-4-1-3-4M30 25q-3-2 0-5M34 25q-2-2 1-5M38 26q-1-3 3-4M33 27q5 4 12 2" fill="none" stroke="#cfcfcf" strokeWidth="1.300" />
        </svg>
        <BrandText>
          <BrandName><BrandLatin>3D</BrandLatin>溜溜网</BrandName>
          <BrandHost>3D66.COM</BrandHost>
        </BrandText>
      </Brand>
    </Page>
  );
}
